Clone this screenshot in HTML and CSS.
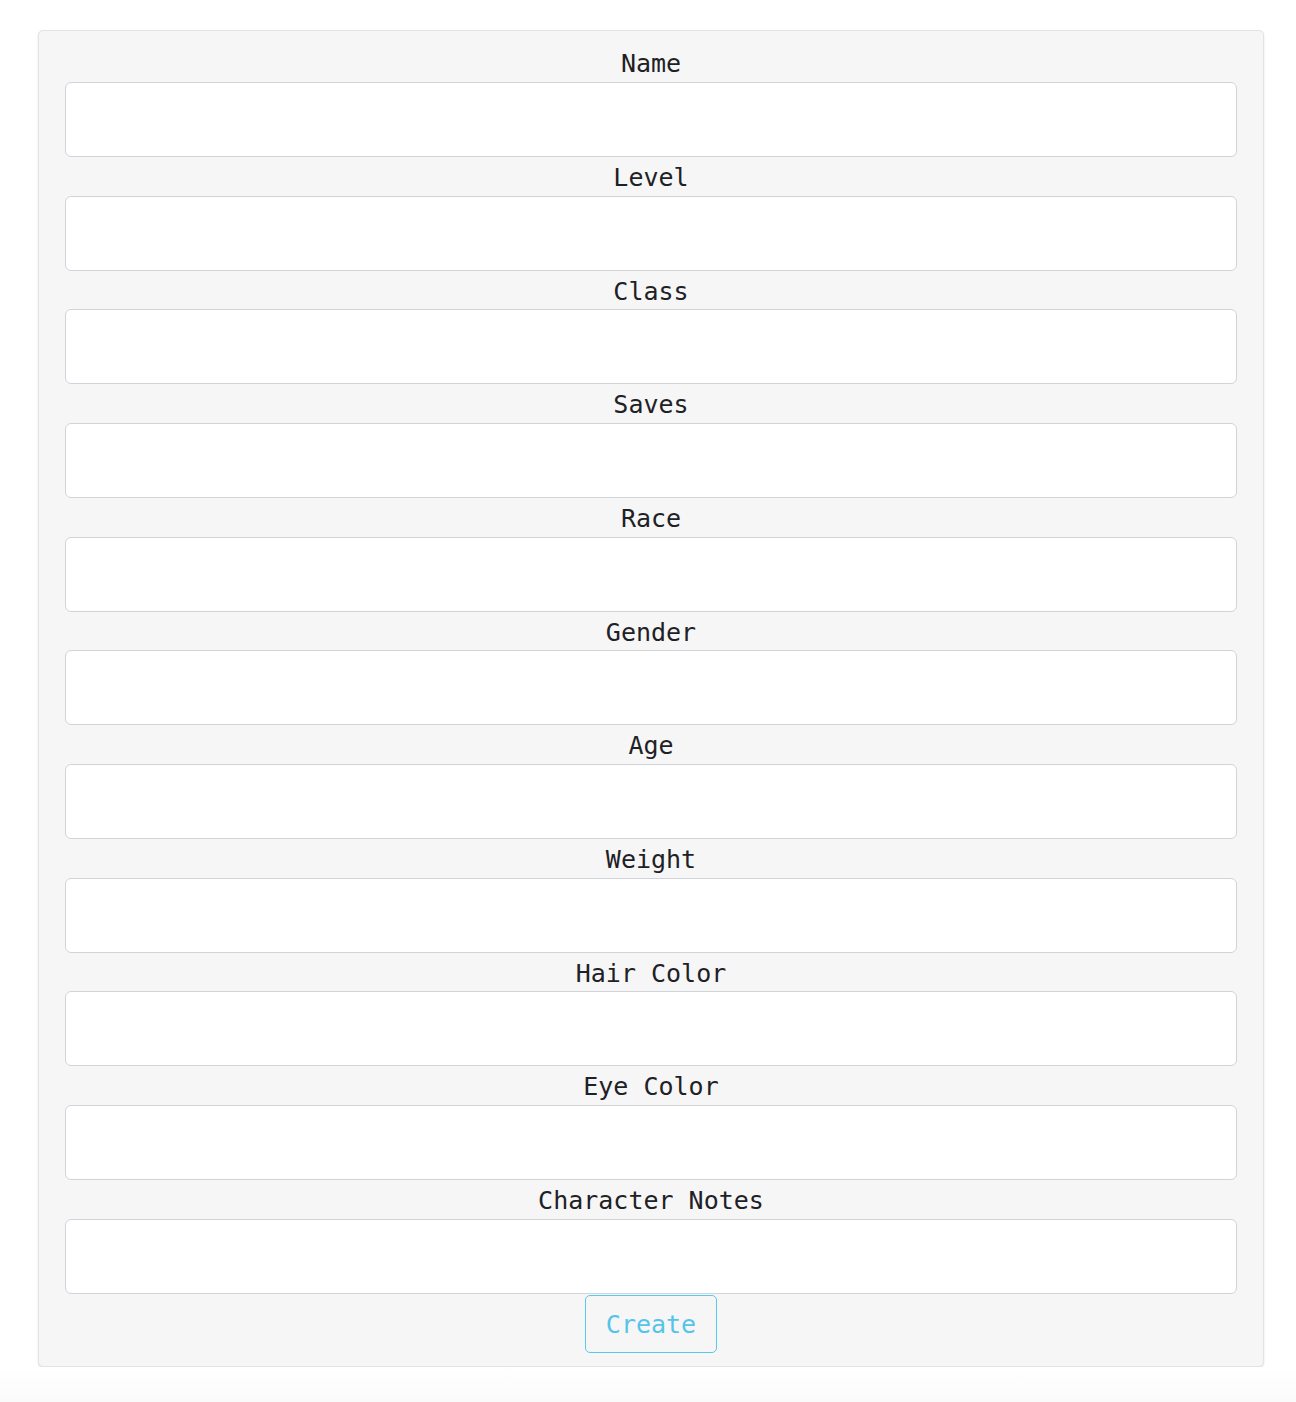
FILE: index.html
```html
<!DOCTYPE html>
<html lang="en">
<head>
<meta charset="utf-8">
<title>Character</title>
<link rel="stylesheet" href="styles.css">
</head>
<body>
<div class="page">
  <form class="well">
    <label class="field-label" for="name">Name</label>
    <input class="field-input" id="name" type="text">
    <label class="field-label" for="level">Level</label>
    <input class="field-input" id="level" type="text">
    <label class="field-label" for="class">Class</label>
    <input class="field-input" id="class" type="text">
    <label class="field-label" for="saves">Saves</label>
    <input class="field-input" id="saves" type="text">
    <label class="field-label" for="race">Race</label>
    <input class="field-input" id="race" type="text">
    <label class="field-label" for="gender">Gender</label>
    <input class="field-input" id="gender" type="text">
    <label class="field-label" for="age">Age</label>
    <input class="field-input" id="age" type="text">
    <label class="field-label" for="weight">Weight</label>
    <input class="field-input" id="weight" type="text">
    <label class="field-label" for="hair">Hair Color</label>
    <input class="field-input" id="hair" type="text">
    <label class="field-label" for="eye">Eye Color</label>
    <input class="field-input" id="eye" type="text">
    <label class="field-label" for="notes">Character Notes</label>
    <input class="field-input" id="notes" type="text">
    <div class="actions">
      <button class="btn-create" type="button">Create</button>
    </div>
  </form>
</div>
<div class="footer-fade"></div>
</body>
</html>
```

FILE: styles.css
```css
html, body {
  margin: 0;
  padding: 0;
  background: #ffffff;
}

body {
  font-family: "DejaVu Sans Mono", "Liberation Mono", monospace;
  color: #212529;
}

.page {
  padding-top: 30px;
  padding-left: 38px;
}

.well {
  box-sizing: border-box;
  width: 1226px;
  margin: 0;
  padding: 12.3px 26px 13px;
  background: #f6f6f6;
  border: 1px solid #e3e3e3;
  border-radius: 5px;
  box-shadow: 0 1px 2px rgba(0, 0, 0, 0.12);
}

.field-label {
  display: block;
  text-align: center;
  font-size: 25px;
  height: 38.7px;
  line-height: 42.7px;
  color: #1e2125;
}

.field-input {
  display: block;
  box-sizing: border-box;
  width: 100%;
  height: 75px;
  margin: 0;
  padding: 6px 12px;
  border: 1px solid #d0d4da;
  border-radius: 6px;
  background: #ffffff;
  font-family: inherit;
  font-size: 25px;
}

.actions {
  display: flex;
  justify-content: center;
  padding-top: 1px;
}

.btn-create {
  box-sizing: border-box;
  height: 58px;
  padding: 0 20px;
  border: 1px solid #5ac8ea;
  border-radius: 5px;
  background: transparent;
  color: #55c4ea;
  font-family: "DejaVu Sans Mono", "Liberation Mono", monospace;
  font-size: 25px;
  line-height: 58px;
}

.footer-fade {
  height: 36px;
  margin-top: 0;
  background: linear-gradient(to bottom, #ffffff, #fafafa);
}
```
